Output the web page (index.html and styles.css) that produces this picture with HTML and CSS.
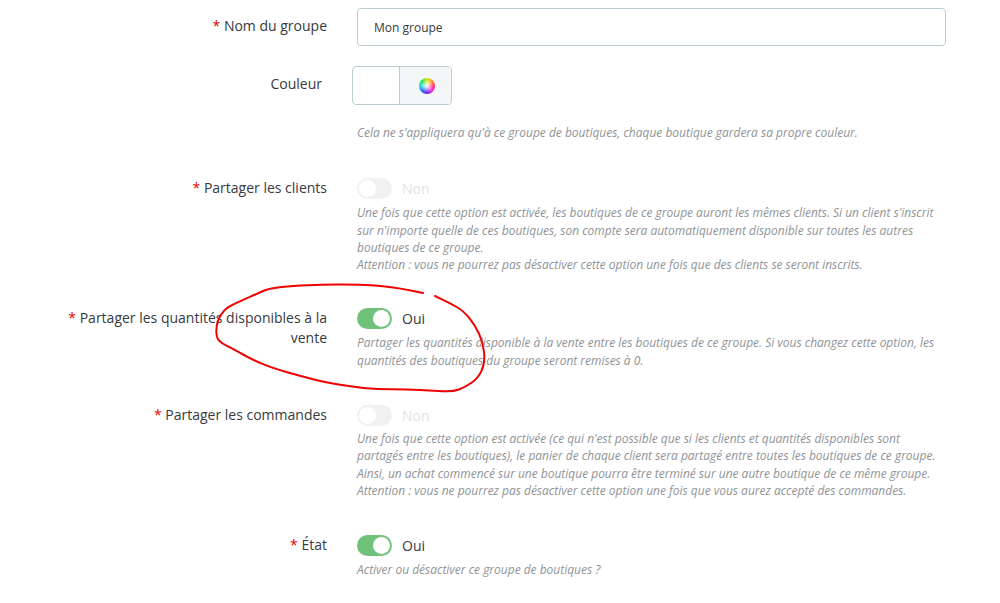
FILE: index.html
```html
<!DOCTYPE html>
<html lang="fr">
<head>
  <meta charset="UTF-8">
  <meta name="viewport" content="width=device-width, initial-scale=1.0">
  <title>Groupe de boutiques</title>
  <link rel="stylesheet" href="styles.css">
</head>
<body>
  <form class="shop-form">
    <div class="form-row row-name">
      <label class="form-label"><span class="required">*</span> Nom du groupe</label>
      <div class="form-field">
        <input class="text-input" type="text" value="Mon groupe">
      </div>
    </div>

    <div class="form-row row-color">
      <label class="form-label label-color">Couleur</label>
      <div class="form-field">
        <div class="color-picker">
          <span class="color-value"></span>
          <span class="color-addon"><span class="color-wheel"></span></span>
        </div>
        <p class="help help-color">Cela ne s'appliquera qu'à ce groupe de boutiques, chaque boutique gardera sa propre couleur.</p>
      </div>
    </div>

    <div class="form-row">
      <label class="form-label"><span class="required">*</span> Partager les clients</label>
      <div class="form-field">
        <div class="switch-line is-disabled">
          <span class="switch"></span>
          <span class="switch-text">Non</span>
        </div>
        <p class="help">Une fois que cette option est activée, les boutiques de ce groupe auront les mêmes clients. Si un client s'inscrit sur n'importe quelle de ces boutiques, son compte sera automatiquement disponible sur toutes les autres boutiques de ce groupe.<br>Attention : vous ne pourrez pas désactiver cette option une fois que des clients se seront inscrits.</p>
      </div>
    </div>

    <div class="form-row row-stock">
      <label class="form-label"><span class="required">*</span> Partager les quantités disponibles à la vente</label>
      <div class="form-field">
        <div class="switch-line">
          <span class="switch is-on"></span>
          <span class="switch-text">Oui</span>
        </div>
        <p class="help">Partager les quantités disponible à la vente entre les boutiques de ce groupe. Si vous changez cette option, les quantités des boutiques du groupe seront remises à 0.</p>
      </div>
    </div>

    <div class="form-row row-orders">
      <label class="form-label"><span class="required">*</span> Partager les commandes</label>
      <div class="form-field">
        <div class="switch-line is-disabled">
          <span class="switch"></span>
          <span class="switch-text">Non</span>
        </div>
        <p class="help">Une fois que cette option est activée (ce qui n'est possible que si les clients et quantités disponibles sont partagés entre les boutiques), le panier de chaque client sera partagé entre toutes les boutiques de ce groupe. Ainsi, un achat commencé sur une boutique pourra être terminé sur une autre boutique de ce même groupe.<br>Attention : vous ne pourrez pas désactiver cette option une fois que vous aurez accepté des commandes.</p>
      </div>
    </div>

    <div class="form-row">
      <label class="form-label"><span class="required">*</span> État</label>
      <div class="form-field">
        <div class="switch-line">
          <span class="switch is-on"></span>
          <span class="switch-text">Oui</span>
        </div>
        <p class="help">Activer ou désactiver ce groupe de boutiques ?</p>
      </div>
    </div>
  </form>

  <!-- red hand-drawn annotation on top of the screenshot -->
  <svg class="scribble" width="1000" height="603" viewBox="0 0 1000 603">
    <path d="M423 293 Q400 288 385 286.5 Q370 285 360 284.8 Q350 284.5 336.5 284.6 Q323 284.7 308 285.2 Q293 285.7 281.5 287 Q270 288.3 265 290.3 Q260 292.3 251.5 296.2 Q243 300 235.5 303.4 Q228 306.7 224 310.9 Q220 315 218 320.9 Q216 326.7 216.4 332.5 Q216.7 338.3 219.2 340.8 Q221.7 343.3 227.4 346.2 Q233 349 243 354.5 Q253 360 263 364.2 Q273 368.3 288 372.5 Q303 376.7 315 379.7 Q327 382.7 338.5 384.6 Q350 386.5 363.5 387.9 Q377 389.3 392 389.3 Q407 389.3 420 390 Q433 390.7 443 391.2 Q453 391.7 459 389.5 Q465 387.3 471.5 382.8 Q478 378.3 481.5 370.8 Q485 363.3 484.2 353.3 Q483.3 343.3 479.2 334.2 Q475 325 469.2 317.9 Q463.3 310.7 456.7 307 Q450 303.3 442.5 299.7 L435 296"/>
  </svg>
</body>
</html>
```

FILE: styles.css
```css
body {
  margin: 0;
  background-color: #ffffff;
  font-family: "Open Sans", sans-serif;
  font-size: 14px;
  color: #363a41;
  overflow: hidden;
}

.shop-form {
  padding: 8px 0 0 47px;
}

.form-row {
  display: grid;
  grid-template-columns: 280px 589px;
  column-gap: 30px;
  margin-bottom: 27px;
}

.form-label {
  text-align: right;
  line-height: 20px;
  padding-top: 8px;
}

.label-color {
  padding-right: 5px;
}

.required {
  color: #e30000;
}

.row-name {
  margin-bottom: 20px;
}

.row-color {
  margin-bottom: 29px;
}

.row-stock,
.row-orders {
  margin-bottom: 28px;
}

.row-orders .help {
  margin-top: 4px;
}

.text-input {
  display: block;
  box-sizing: border-box;
  width: 100%;
  height: 38px;
  padding: 0 16px;
  border: 1px solid #bbcdd2;
  border-radius: 4px;
  font-family: "Open Sans", sans-serif;
  font-size: 12px;
  color: #363a41;
  background: #ffffff;
}

.color-picker {
  display: flex;
  box-sizing: border-box;
  width: 100px;
  height: 39px;
  margin-left: -5px;
  border: 1px solid #bbcdd2;
  border-radius: 4px;
  overflow: hidden;
}

.color-value {
  width: 46px;
  border-right: 1px solid #bbcdd2;
}

.color-addon {
  flex: 1;
  display: flex;
  justify-content: center;
  align-items: center;
  padding-left: 3px;
  background-color: #f3f6f7;
}

.color-wheel {
  width: 16px;
  height: 16px;
  border-radius: 50%;
  background:
    radial-gradient(circle, #ffffff 0%, rgba(255, 255, 255, 0.6) 25%, rgba(255, 255, 255, 0) 60%),
    conic-gradient(#c8f020, #ff9a20, #ff2a6a, #f020e0, #6a20f0, #2070ff, #20e0e0, #30e040, #c8f020);
}

.switch-line {
  display: flex;
  align-items: center;
  gap: 10px;
  height: 21px;
  margin-top: 8px;
}

.switch {
  position: relative;
  box-sizing: border-box;
  width: 35px;
  height: 21px;
  border-radius: 11px;
  background-color: #eff1f2;
}

.switch::after {
  content: "";
  position: absolute;
  top: 2px;
  left: 2px;
  width: 17px;
  height: 17px;
  border-radius: 50%;
  background-color: #ffffff;
}

.switch.is-on {
  background-color: #70c27b;
}

.switch.is-on::after {
  left: 16px;
}

.switch-text {
  font-size: 14px;
  line-height: 20px;
}

.is-disabled .switch-text {
  color: #dfe3e6;
}

.help {
  margin: 5px 0 0;
  font-size: 11.98px;
  font-style: italic;
  line-height: 17.3px;
  color: #8f9397;
}

.help-color {
  margin-top: 19px;
}

.scribble {
  position: absolute;
  top: 0;
  left: 0;
  pointer-events: none;
}

.scribble path {
  fill: none;
  stroke: #f00000;
  stroke-width: 2;
  stroke-linecap: round;
}
```
